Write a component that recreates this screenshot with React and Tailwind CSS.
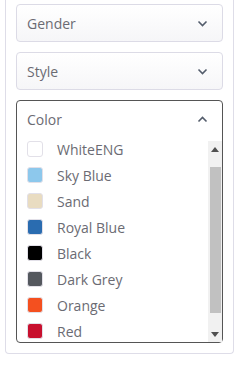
const colors = [
  { name: 'WhiteENG', hex: '#ffffff' },
  { name: 'Sky Blue', hex: '#8dc8ec' },
  { name: 'Sand', hex: '#e9dcc1' },
  { name: 'Royal Blue', hex: '#2a6cb0' },
  { name: 'Black', hex: '#000000' },
  { name: 'Dark Grey', hex: '#54585e' },
  { name: 'Orange', hex: '#f4501f' },
  { name: 'Red', hex: '#c8102e' },
]

function Chevron({ up }) {
  return (
    <svg width="11" height="7" viewBox="0 0 11 7" className="shrink-0">
      <path
        d={up ? 'M1.5 5.5 L5.5 1.5 L9.5 5.5' : 'M1.5 1.5 L5.5 5.5 L9.5 1.5'}
        fill="none"
        stroke="#535c6b"
        strokeWidth="1.6"
      />
    </svg>
  )
}

function Filter({ label }) {
  return (
    <div className="h-[38px] flex items-center justify-between pl-[10px] pr-[14px] rounded-[4px] border border-[#dcdbe6] bg-gradient-to-b from-white to-[#f6f6f8]">
      <span>{label}</span>
      <Chevron />
    </div>
  )
}

export default function App() {
  return (
    <div
      className="w-[240px] h-[381px] bg-white pl-[5px] text-[14px] text-[#6b6b73]"
      style={{ fontFamily: '"Open Sans", sans-serif' }}
    >
      <div className="w-[229px] border-x border-b border-[#dedde8] rounded-b-[4px] px-[10px] pt-[4px] pb-[10px] flex flex-col gap-[10px]">
        <Filter label="Gender" />
        <Filter label="Style" />

        <div className="rounded-[4px] border border-[#555] bg-white flex flex-col">
          <div className="h-[37px] flex items-center justify-between pl-[10px] pr-[14px]">
            <span>Color</span>
            <Chevron up />
          </div>
          <div className="h-[204px] flex overflow-hidden">
            <div className="flex-1 -mt-[2px]">
              {colors.map((c) => (
                <div key={c.name} className="h-[26px] flex items-center pl-[10px] gap-[14px]">
                  <span
                    className="block shrink-0 w-[16px] h-[16px] rounded-[3px] border border-[#e2e0e8]"
                    style={{ backgroundColor: c.hex }}
                  />
                  <span>{c.name}</span>
                </div>
              ))}
            </div>
            <div className="w-[14px] mt-[3px] bg-[#f1f1f1] flex flex-col items-center">
              <div className="h-[16px] flex items-center justify-center">
                <svg width="8" height="5" viewBox="0 0 8 5">
                  <path d="M0 5 L4 0 L8 5 Z" fill="#505050" />
                </svg>
              </div>
              <div className="mt-[10px] w-[11px] ml-[1px] h-[146px] bg-[#c1c1c1]" />
              <div className="flex-1" />
              <div className="h-[16px] flex items-center justify-center">
                <svg width="8" height="5" viewBox="0 0 8 5">
                  <path d="M0 0 L8 0 L4 5 Z" fill="#505050" />
                </svg>
              </div>
            </div>
          </div>
        </div>
      </div>
    </div>
  )
}
